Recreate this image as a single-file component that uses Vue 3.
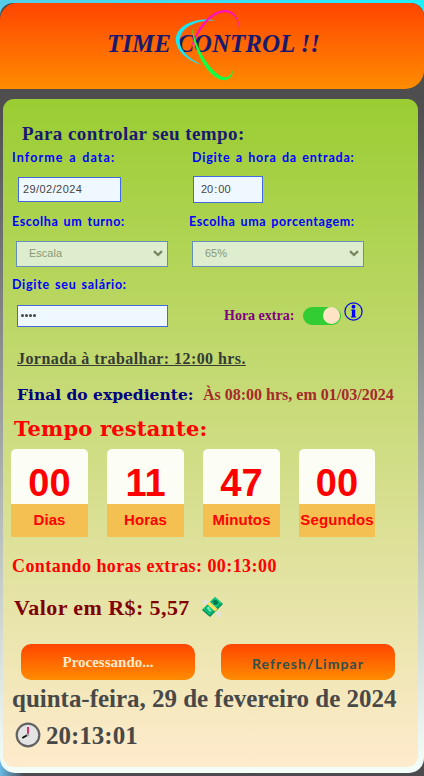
<script setup>
const countdown = [
  { value: '00', label: 'Dias' },
  { value: '11', label: 'Horas' },
  { value: '47', label: 'Minutos' },
  { value: '00', label: 'Segundos' },
]
</script>

<template>
  <div class="page">
    <div class="shell">
      <header class="header">
        <h1 class="brand">TIME CONTROL !!</h1>
        <svg class="rings" viewBox="0 0 70 76" width="70" height="76">
          <path d="M48 15 C28 10 8 17 5 31 C3 44 17 55 31 59 C17 52 7 43 9 32 C12 19 30 13 48 15Z" fill="#19e6f5" />
          <path d="M19 45 C24 24 38 4 55 4 C64 5 70 14 68 28 C69 15 64 7 54 6 C39 7 27 25 19 45Z" fill="#ff0cc8" />
          <path d="M21 21 C22 45 37 71 51 74 C58 75 62 70 62 64 C60 70 56 72 52 71 C40 67 25 43 21 21Z" fill="#10ff45" />
        </svg>
      </header>

      <main class="card">
        <h2 class="title">Para controlar seu tempo:</h2>
        <div class="row labels">
          <label class="l-date">Informe a data:</label>
          <label class="l-time">Digite a hora da entrada:</label>
        </div>
        <div class="row inputs">
          <div class="field date">29/02/2024</div>
          <div class="field time">20<span class="colon">:</span>00</div>
        </div>
        <div class="row labels">
          <label class="l-shift">Escolha um turno:</label>
          <label class="l-percent">Escolha uma porcentagem:</label>
        </div>
        <div class="row selects">
          <div class="select shift">Escala
            <svg width="10" height="7" viewBox="0 0 10 7"><path d="M1 1.2 5 5 9 1.2" /></svg>
          </div>
          <div class="select percent">65%
            <svg width="10" height="7" viewBox="0 0 10 7"><path d="M1 1.2 5 5 9 1.2" /></svg>
          </div>
        </div>
        <div class="row labels third"><label class="l-salary">Digite seu salário:</label></div>
        <div class="row salary">
          <div class="field password"><i></i><i></i><i></i><i></i></div>
          <span class="extra">Hora extra:</span>
          <div class="toggle"><i></i></div>
          <svg class="info" width="19" height="19" viewBox="0 0 19 19">
            <circle cx="9.5" cy="9.5" r="8.6" fill="none" stroke="#0000e8" stroke-width="1.2" />
            <circle cx="9.5" cy="4.7" r="1.9" fill="#00f" />
            <path d="M7.2 7.6h4v7h.9v1H6.9v-1h1v-6h-.7z" fill="#00f" />
          </svg>
        </div>
        <p class="journey"><span>Jornada à trabalhar: 12:00 hrs.</span></p>
        <div class="row finish">
          <span class="finish-label">Final do expediente:</span>
          <span class="finish-value">Às 08:00 hrs, em 01/03/2024</span>
        </div>
        <h2 class="remaining">Tempo restante:</h2>
        <div class="countdown">
          <div v-for="item in countdown" :key="item.label" class="unit">
            <div class="number">{{ item.value }}</div>
            <div class="caption">{{ item.label }}</div>
          </div>
        </div>
        <p class="counting">Contando horas extras: 00:13:00</p>
        <div class="row value">
          <span>Valor em R$: 5,57</span>
          <svg class="money" width="24" height="24" viewBox="0 0 24 24">
            <path d="M1 4 8 5 7 9 3 8zM15 17l5-2-1 8-3-3z" fill="#e2e2e2" />
            <path d="M1 14 14 1 22 8 9 21z" fill="#008b55" />
            <path d="M2 13 14 1 21 7 9 19z" fill="#12cf87" />
            <path d="m4 13 9.5-9.5L19 8l-9.5 9z" fill="none" stroke="#008b55" stroke-width=".8" />
            <circle cx="14.5" cy="6.5" r="2.5" fill="#00784a" />
            <path d="M6 12q3-1 2 1t2 2" fill="none" stroke="#b5f5d9" stroke-width="1" />
            <path d="m6 8 2.5-2.5 8 7.5-2.5 2.5z" fill="#ffdf63" />
          </svg>
        </div>
        <div class="row buttons">
          <button class="process">Processando...</button>
          <button class="refresh">Refresh/Limpar</button>
        </div>
        <p class="today">quinta-feira, 29 de fevereiro de 2024</p>
        <div class="row clock">
          <svg width="26" height="26" viewBox="0 0 26 26">
            <circle cx="13" cy="13" r="11.3" fill="#e4e4e4" stroke="#636363" stroke-width="2.2" />
            <path d="M13 5v8" stroke="#df0b55" stroke-width="1.7" />
            <path d="m12.5 13-5.2 3" stroke="#111" stroke-width="2" />
            <circle cx="13" cy="13" r="1.4" fill="#aaa" />
          </svg>
          <span>20:13:01</span>
        </div>
      </main>
    </div>
  </div>
</template>

<style>
body { margin: 0; }
</style>

<style scoped>
* { box-sizing: border-box; }
h1, h2, p { margin: 0; }
.page {
  height: 776px;
  padding: 3px 0;
  overflow: hidden;
  font-family: "Liberation Serif", serif;
  font-weight: bold;
  white-space: nowrap;
  background: linear-gradient(90deg, #57cde8, #20eeff) top / 100% 30px no-repeat,
    linear-gradient(90deg, #68b9e8, #4d4a4f 24px);
}
.shell { height: 770px; border-radius: 13px 13px 15px 15px; background: linear-gradient(#484848, #4f4f4f 14%, #f5fffa); }
.header {
  position: relative;
  height: 86px;
  border-radius: 17px 14px 19px 0;
  background: linear-gradient(orangered, darkorange);
}
.brand {
  padding-left: 107px;
  font-size: 25px;
  line-height: 81px;
  font-style: italic;
  letter-spacing: 0;
  color: midnightblue;
}
.rings { position: absolute; left: 171px; top: 3px; }
.card {
  width: 415px;
  height: 668px;
  margin: 10px 0 0 3px;
  border-radius: 11px;
  background: linear-gradient(yellowgreen, #ffebcd);
  overflow: hidden;
}
.row { display: flex; }
.title { height: 47px; padding: 23px 0 0 19px; font-size: 19px; line-height: 24px; letter-spacing: .43px; color: midnightblue; }
.labels { height: 24px; padding-left: 9px; font: bold 12.5px/24px Lato, sans-serif; letter-spacing: .6px; word-spacing: 1.5px; color: #00f; }
.l-date { width: 180px; letter-spacing: 1.1px; }
.l-time { letter-spacing: .8px; }
.l-shift { width: 177px; }
.inputs { height: 40px; padding: 6px 0 6px 15px; align-items: center; gap: 72px; }
.field { border: 1px solid royalblue; background: aliceblue; font: 11px/23px "Liberation Sans", sans-serif; color: #444; }
.date { width: 103px; height: 25px; margin-top: -1px; padding-left: 4px; letter-spacing: .42px; }
.time { width: 70px; height: 27px; margin-top: -1px; line-height: 25px; padding-left: 7px; letter-spacing: 0; }
.colon { margin: 0 1px; }
.selects { height: 39px; padding: 7px 0 0 13px; gap: 24px; }
.select {
  display: flex;
  align-items: center;
  justify-content: space-between;
  height: 26px;
  padding: 0 4px 2px 12px;
  border: 1px solid #6490b4;
  background: #deedcd;
  color: #899875;
  font: 11px "Liberation Sans", sans-serif;
}
.select path { fill: none; stroke: #788660; stroke-width: 2.3; }
.shift { width: 152px; }
.percent { width: 172px; }
.third { height: 23px; letter-spacing: .7px; }
.salary { height: 53px; padding: 9px 0 0 14px; }
.password { display: flex; width: 151px; height: 22px; padding: 8px 0 0 3px; gap: 1px; }
.password i { width: 3px; height: 3px; border-radius: 2px; background: #444; }
.extra { width: 79px; margin-left: 56px; font-size: 14px; line-height: 22px; color: purple; }
.toggle { display: flex; justify-content: flex-end; width: 38px; height: 18px; margin-top: 2px; padding-right: 1px; border-radius: 9px; background: limegreen; }
.toggle i { width: 17px; height: 17px; border-radius: 50%; background: bisque; }
.info { margin: -3px 0 0 3px; }
.journey { height: 34px; padding-left: 14px; font-size: 16px; line-height: 20px; letter-spacing: .43px; color: #363b36; }
.journey span { text-decoration: underline; }
.finish { height: 32px; padding-left: 14px; line-height: 24px; }
.finish-label { width: 186px; font: bold 15.5px/24px "DejaVu Serif", serif; color: navy; }
.finish-value { font-size: 16px; color: brown; }
.remaining { height: 34px; padding: 1px 0 0 11px; font: bold 21px/25px "DejaVu Serif", serif; letter-spacing: .2px; color: red; }
.countdown { display: grid; grid-template-columns: 77px 77px 77px 76px; gap: 19px; height: 88px; margin-left: 8px; font-family: "Liberation Sans", sans-serif; color: red; text-align: center; }
.unit { overflow: hidden; border-radius: 5px 5px 0 0; }
.number { height: 55px; background: #fcfdf4; font-size: 38px; line-height: 68px; }
.caption { height: 33px; background: #f5c052; font-size: 15px; line-height: 32px; letter-spacing: .1px; }
.counting { height: 49px; padding: 17px 0 0 9px; font-size: 18px; line-height: 24px; letter-spacing: .43px; color: red; }
.value { height: 58px; padding: 6px 0 0 11px; font-size: 22px; line-height: 32px; letter-spacing: .42px; color: maroon; }
.value span { width: 187px; }
.money { margin: 4px 0 0; }
.buttons { height: 36px; margin-left: 18px; gap: 26px; }
.buttons button { width: 174px; height: 36px; border: 0; padding: 0; border-radius: 10px; background: linear-gradient(orangered, darkorange); }
.buttons .process { font: bold 15px "Liberation Serif", serif; color: blanchedalmond; }
.buttons .refresh { padding-top: 3px; font: bold 14px Lato, sans-serif; letter-spacing: 1.1px; color: darkslategray; }
.today { height: 38px; padding-left: 9px; font-size: 25px; line-height: 37px; letter-spacing: -.02px; color: #484848; }
.clock { padding-left: 12px; font-size: 25px; line-height: 36px; color: #484848; }
.clock svg { margin: 4px 5px 0 0; }
</style>
